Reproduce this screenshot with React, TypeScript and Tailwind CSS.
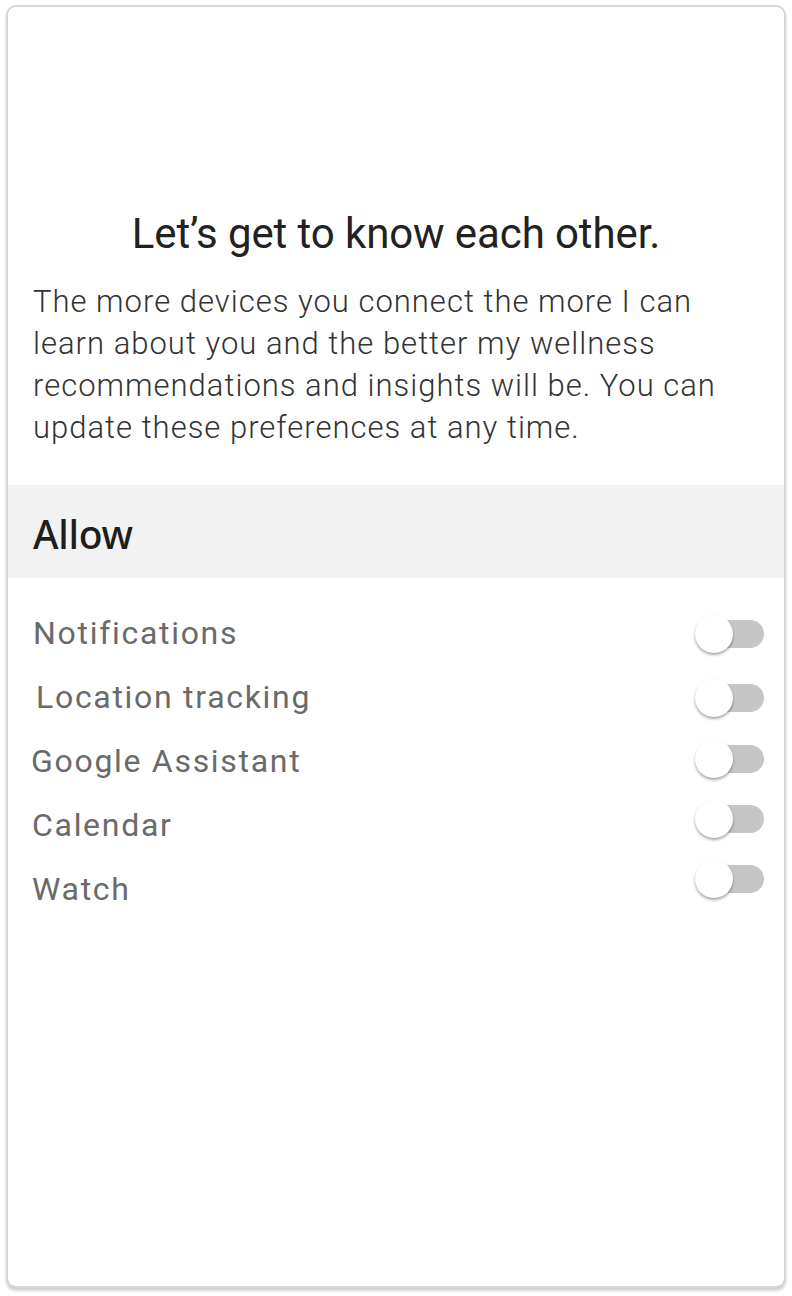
import React from "react";

const items = [
  { label: "Notifications", pl: "pl-[25px]", ty: "translate-y-[1px]" },
  { label: "Location tracking", pl: "pl-[28px]", ty: "translate-y-[1px]" },
  { label: "Google Assistant", pl: "pl-[23px]", ty: "-translate-y-[2px]" },
  { label: "Calendar", pl: "pl-[24px]", ty: "-translate-y-[6px]" },
  { label: "Watch", pl: "pl-[24px]", ty: "-translate-y-[10px]" },
];

function Toggle({ ty }: { ty: string }) {
  return (
    <div className={`relative w-[72px] h-[40px] ${ty}`}>
      <div className="absolute left-[6px] right-[2px] top-[6px] h-[28px] rounded-full bg-[#c6c6c6]" />
      <div className="absolute left-[1px] top-[1px] w-[38px] h-[38px] rounded-full bg-white shadow-[0_2px_3px_rgba(0,0,0,0.35)]" />
    </div>
  );
}

export default function App() {
  return (
    <div className="w-[792px] h-[1296px] bg-white p-[5px_6px_8px_6px]">
      <div className="h-full rounded-[10px] border-2 border-[#d6d6d6] bg-white shadow-[0_3px_3px_rgba(0,0,0,0.18)] overflow-hidden flex flex-col">
        <div className="pt-[202px] text-center text-[42px] leading-[50px] text-[#222] font-['Roboto',sans-serif] tracking-[-0.1px]">
          Let’s get to know each other.
        </div>
        <p className="mt-[22px] px-[25px] whitespace-nowrap text-[31px] leading-[42px] text-[#333] font-['Roboto',sans-serif] font-light tracking-[1px]">
          The more devices you connect the more I can
          <br />
          learn about you and the better my wellness
          <br />
          recommendations and insights will be. You can
          <br />
          update these preferences at any time.
        </p>
        <div className="mt-[36px] h-[93px] bg-[#f2f2f2] flex items-center pl-[25px] pt-[6px] text-[39px] font-medium text-[#1e1e1e] font-['Noto_Sans',sans-serif] tracking-[-0.3px]">
          Allow
        </div>
        <div className="pt-[23px] flex flex-col">
          {items.map((it) => (
            <div key={it.label} className="h-[64px] flex items-center justify-between pr-[18px]">
              <span className={`${it.pl} text-[32px] text-[#6a6a6a] font-['Roboto',sans-serif] tracking-[1.7px]`}>
                {it.label}
              </span>
              <Toggle ty={it.ty} />
            </div>
          ))}
        </div>
      </div>
    </div>
  );
}
